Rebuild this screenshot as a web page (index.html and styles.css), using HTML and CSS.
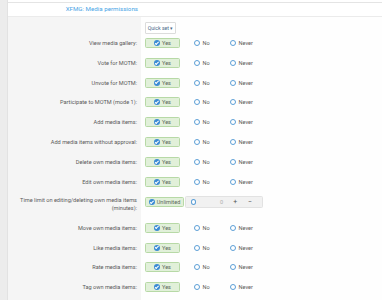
FILE: index.html
```html
<!DOCTYPE html>
<html lang="en">
<head>
  <meta charset="UTF-8">
  <title>XFMG: Media permissions</title>
  <link rel="stylesheet" href="styles.css">
</head>
<body>
  <div class="page">
    <div class="side"></div>
    <div class="panel">
      <div class="topline"></div>
      <h2 class="block-header">XFMG: Media permissions</h2>

      <div class="row quick">
        <div class="label"></div>
        <div class="value">
          <button class="quick-set">Quick set <span class="caret">▾</span></button>
        </div>
      </div>

      <div class="row">
        <div class="label">View media gallery:</div>
        <div class="value">
          <span class="choice yes"><span class="tick"></span>Yes</span>
          <span class="choice no"><span class="radio"></span>No</span>
          <span class="choice never"><span class="radio"></span>Never</span>
        </div>
      </div>
      <div class="row">
        <div class="label">Vote for MOTM:</div>
        <div class="value">
          <span class="choice yes"><span class="tick"></span>Yes</span>
          <span class="choice no"><span class="radio"></span>No</span>
          <span class="choice never"><span class="radio"></span>Never</span>
        </div>
      </div>
      <div class="row">
        <div class="label">Unvote for MOTM:</div>
        <div class="value">
          <span class="choice yes"><span class="tick"></span>Yes</span>
          <span class="choice no"><span class="radio"></span>No</span>
          <span class="choice never"><span class="radio"></span>Never</span>
        </div>
      </div>
      <div class="row">
        <div class="label">Participate to MOTM (mode 1):</div>
        <div class="value">
          <span class="choice yes"><span class="tick"></span>Yes</span>
          <span class="choice no"><span class="radio"></span>No</span>
          <span class="choice never"><span class="radio"></span>Never</span>
        </div>
      </div>
      <div class="row">
        <div class="label">Add media items:</div>
        <div class="value">
          <span class="choice yes"><span class="tick"></span>Yes</span>
          <span class="choice no"><span class="radio"></span>No</span>
          <span class="choice never"><span class="radio"></span>Never</span>
        </div>
      </div>
      <div class="row">
        <div class="label">Add media items without approval:</div>
        <div class="value">
          <span class="choice yes"><span class="tick"></span>Yes</span>
          <span class="choice no"><span class="radio"></span>No</span>
          <span class="choice never"><span class="radio"></span>Never</span>
        </div>
      </div>
      <div class="row">
        <div class="label">Delete own media items:</div>
        <div class="value">
          <span class="choice yes"><span class="tick"></span>Yes</span>
          <span class="choice no"><span class="radio"></span>No</span>
          <span class="choice never"><span class="radio"></span>Never</span>
        </div>
      </div>
      <div class="row">
        <div class="label">Edit own media items:</div>
        <div class="value">
          <span class="choice yes"><span class="tick"></span>Yes</span>
          <span class="choice no"><span class="radio"></span>No</span>
          <span class="choice never"><span class="radio"></span>Never</span>
        </div>
      </div>
      <div class="row tall">
        <div class="label">Time limit on editing/deleting own media items (minutes):</div>
        <div class="value">
          <span class="choice yes unlimited"><span class="tick"></span>Unlimited</span>
          <span class="number-box">
            <span class="radio"></span>
            <span class="num">0</span>
            <span class="step">+</span>
            <span class="step">−</span>
          </span>
        </div>
      </div>
      <div class="row">
        <div class="label">Move own media items:</div>
        <div class="value">
          <span class="choice yes"><span class="tick"></span>Yes</span>
          <span class="choice no"><span class="radio"></span>No</span>
          <span class="choice never"><span class="radio"></span>Never</span>
        </div>
      </div>
      <div class="row">
        <div class="label">Like media items:</div>
        <div class="value">
          <span class="choice yes"><span class="tick"></span>Yes</span>
          <span class="choice no"><span class="radio"></span>No</span>
          <span class="choice never"><span class="radio"></span>Never</span>
        </div>
      </div>
      <div class="row">
        <div class="label">Rate media items:</div>
        <div class="value">
          <span class="choice yes"><span class="tick"></span>Yes</span>
          <span class="choice no"><span class="radio"></span>No</span>
          <span class="choice never"><span class="radio"></span>Never</span>
        </div>
      </div>
      <div class="row">
        <div class="label">Tag own media items:</div>
        <div class="value">
          <span class="choice yes"><span class="tick"></span>Yes</span>
          <span class="choice no"><span class="radio"></span>No</span>
          <span class="choice never"><span class="radio"></span>Never</span>
        </div>
      </div>
    </div>
  </div>
</body>
</html>
```

FILE: styles.css
```css
body {
  margin: 0;
  padding: 0;
  font-family: Roboto, "Liberation Sans", sans-serif;
  font-size: 5.6px;
  color: #5a5a5a;
  background: #ffffff;
  overflow: hidden;
}

.page {
  display: flex;
  height: 300px;
}

.side {
  width: 8px;
  background: #ececec;
  border-right: 1px solid #e2e2e2;
  box-sizing: border-box;
}

.panel {
  flex: 1;
  background: linear-gradient(to right, #f5f5f5 133px, #fefefe 133px);
}

.topline {
  height: 2px;
  background: #ffffff;
  border-bottom: 1px solid #e4e4e4;
}

.block-header {
  margin: 0;
  height: 13px;
  line-height: 13px;
  background: #ffffff;
  border-bottom: 1px solid #ebebeb;
  font-size: 6.2px;
  font-weight: normal;
  color: #4aa5e6;
  padding-right: 244px;
  text-align: right;
}

.row {
  display: flex;
  align-items: center;
  height: 19.85px;
}

.row.quick {
  height: 16px;
  align-items: flex-start;
  padding-top: 5px;
  box-sizing: border-box;
}

.row.tall {
  height: 26px;
  align-items: flex-start;
  padding-top: 4px;
  box-sizing: border-box;
}

.label {
  width: 133px;
  padding-right: 4px;
  box-sizing: border-box;
  text-align: right;
  line-height: 8px;
}

.value {
  display: flex;
  align-items: center;
  padding-left: 4px;
}

.quick-set {
  font-family: inherit;
  font-size: 5.2px;
  color: #4a6a8a;
  background: #ffffff;
  border: 1px solid #dcdcdc;
  border-radius: 1px;
  height: 12px;
  width: 31px;
  padding: 0;
}

.caret {
  font-size: 4.5px;
}

.choice {
  display: inline-flex;
  align-items: center;
}

.choice.yes {
  width: 35px;
  height: 10px;
  box-sizing: border-box;
  justify-content: center;
  background: #e1f0d9;
  border: 1px solid #b7d9a6;
  border-radius: 1.5px;
  color: #5a665a;
}

.choice.unlimited {
  width: 39px;
}

.tick {
  width: 6px;
  height: 6px;
  border-radius: 50%;
  background: #3b8bd4;
  margin-right: 2px;
  position: relative;
}

.tick::after {
  content: "";
  position: absolute;
  left: 2px;
  top: 0.8px;
  width: 1.2px;
  height: 2.6px;
  border: solid #ffffff;
  border-width: 0 0.8px 0.8px 0;
  transform: rotate(45deg);
}

.radio {
  width: 4px;
  height: 4px;
  border-radius: 50%;
  border: 0.9px solid #5c9fd6;
  background: #ffffff;
  margin-right: 2.5px;
}

.choice.no {
  margin-left: 14px;
  width: 36px;
}

.number-box {
  display: inline-flex;
  align-items: center;
  height: 12px;
  width: 78px;
  margin-left: 1px;
  padding-left: 5px;
  box-sizing: border-box;
  background: #f1f1f1;
  border: 1px solid #e2e2e2;
  border-radius: 1.5px;
}

.num {
  color: #b0b0b0;
  margin-left: 21px;
  width: 16px;
}

.step {
  color: #555555;
  font-size: 7px;
  width: 17px;
}
```
